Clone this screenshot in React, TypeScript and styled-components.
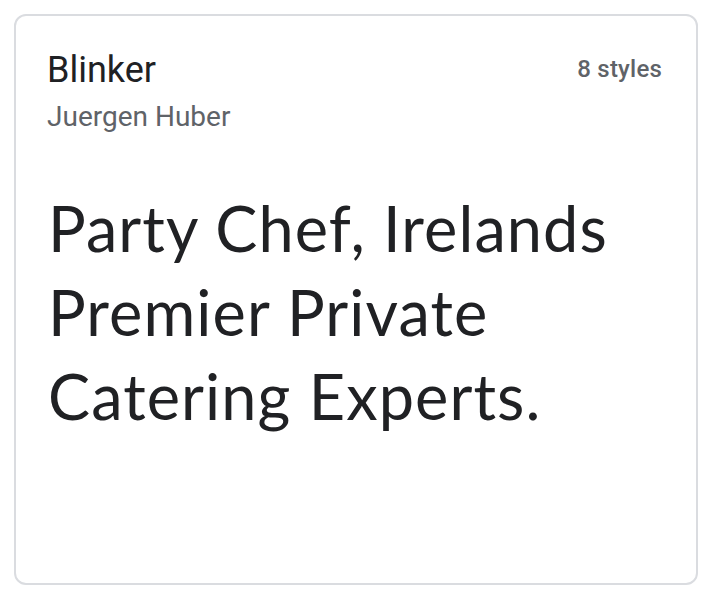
import React from "react";
import styled, { createGlobalStyle } from "styled-components";

const Global = createGlobalStyle`
  html, body { margin: 0; padding: 0; background: #ffffff; }
  body { font-family: Roboto, "Liberation Sans", sans-serif; }
`;

const Page = styled.div`
  padding: 14px;
  width: 712px;
  box-sizing: border-box;
`;

const Card = styled.article`
  box-sizing: border-box;
  width: 684px;
  height: 571px;
  border: 2px solid #dadce0;
  border-radius: 12px;
  padding: 30px 34px 0 31px;
  display: flex;
  flex-direction: column;
`;

const Header = styled.header`
  display: flex;
  justify-content: space-between;
  align-items: flex-start;
`;

const Titles = styled.div`
  display: flex;
  flex-direction: column;
`;

const FontName = styled.h2`
  margin: 0;
  font: 400 36px/48px Roboto, "Liberation Sans", sans-serif;
  color: #202124;
`;

const Designer = styled.div`
  margin-top: 3px;
  font: 400 28px/40px Roboto, "Liberation Sans", sans-serif;
  color: #5f6368;
`;

const Styles = styled.div`
  margin-top: 7px;
  font: 500 24px/32px Roboto, "Liberation Sans", sans-serif;
  color: #5f6368;
  letter-spacing: 0.2px;
`;

const Sample = styled.p`
  margin: 49px 0 0 1px;
  font: 400 63px/84px Lato, "Noto Sans", sans-serif;
  color: #202124;
  letter-spacing: 1.1px;
`;

export default function App() {
  return (
    <>
      <Global />
      <Page>
        <Card>
          <Header>
            <Titles>
              <FontName>Blinker</FontName>
              <Designer>Juergen Huber</Designer>
            </Titles>
            <Styles>8 styles</Styles>
          </Header>
          <Sample>
            Party Chef, Irelands
            <br />
            Premier Private
            <br />
            Catering Experts.
          </Sample>
        </Card>
      </Page>
    </>
  );
}
